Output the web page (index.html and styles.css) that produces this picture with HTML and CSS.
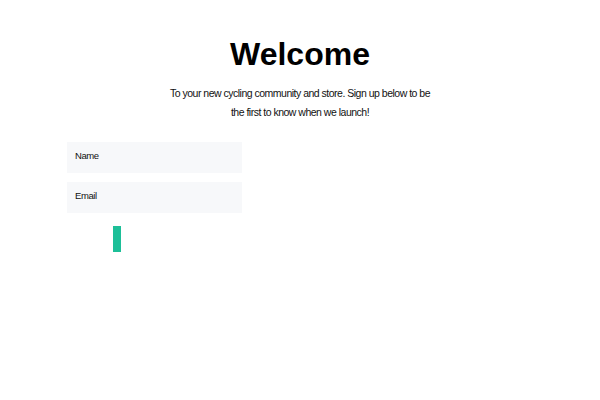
FILE: index.html
```html
<!DOCTYPE html>
<html>
<head>
<meta charset="utf-8">
<link rel="stylesheet" href="styles.css">
</head>
<body>
<main class="page">
  <h1 class="title">Welcome</h1>
  <p class="intro">To your new cycling community and store. Sign up below to be<br>the first to know when we launch!</p>
  <form class="signup">
    <input class="field" type="text" placeholder="Name">
    <input class="field" type="email" placeholder="Email">
    <div class="btn-row"><button class="submit" type="button"></button></div>
  </form>
</main>
</body>
</html>
```
FILE: styles.css
```css
html, body { margin: 0; padding: 0; background: #fff; }
body { font-family: "Liberation Sans", Arial, sans-serif; color: #111; }
.page { padding-top: 34px; }
.title { margin: 0; text-align: center; font-size: 32px; font-weight: bold; line-height: 40px; color: #000; }
.intro { margin: 10px 0 0; text-align: center; font-size: 10.5px; letter-spacing: -0.5px; line-height: 19px; color: #111; }
.signup { margin: 20px 0 0 67px; width: 175px; display: flex; flex-direction: column; gap: 9px; }
.field { box-sizing: border-box; width: 175px; height: 31px; border: 0; background: #f7f8fa; padding: 0 8px 4px; font-family: "Liberation Sans", Arial, sans-serif; font-size: 9.5px; letter-spacing: -0.4px; outline: none; }
.field::placeholder { color: #111; }
.btn-row { padding: 4px 0 0 46px; }
.submit { display: block; width: 8px; height: 26px; border: 0; padding: 0; background: #1dbf98; }
```
